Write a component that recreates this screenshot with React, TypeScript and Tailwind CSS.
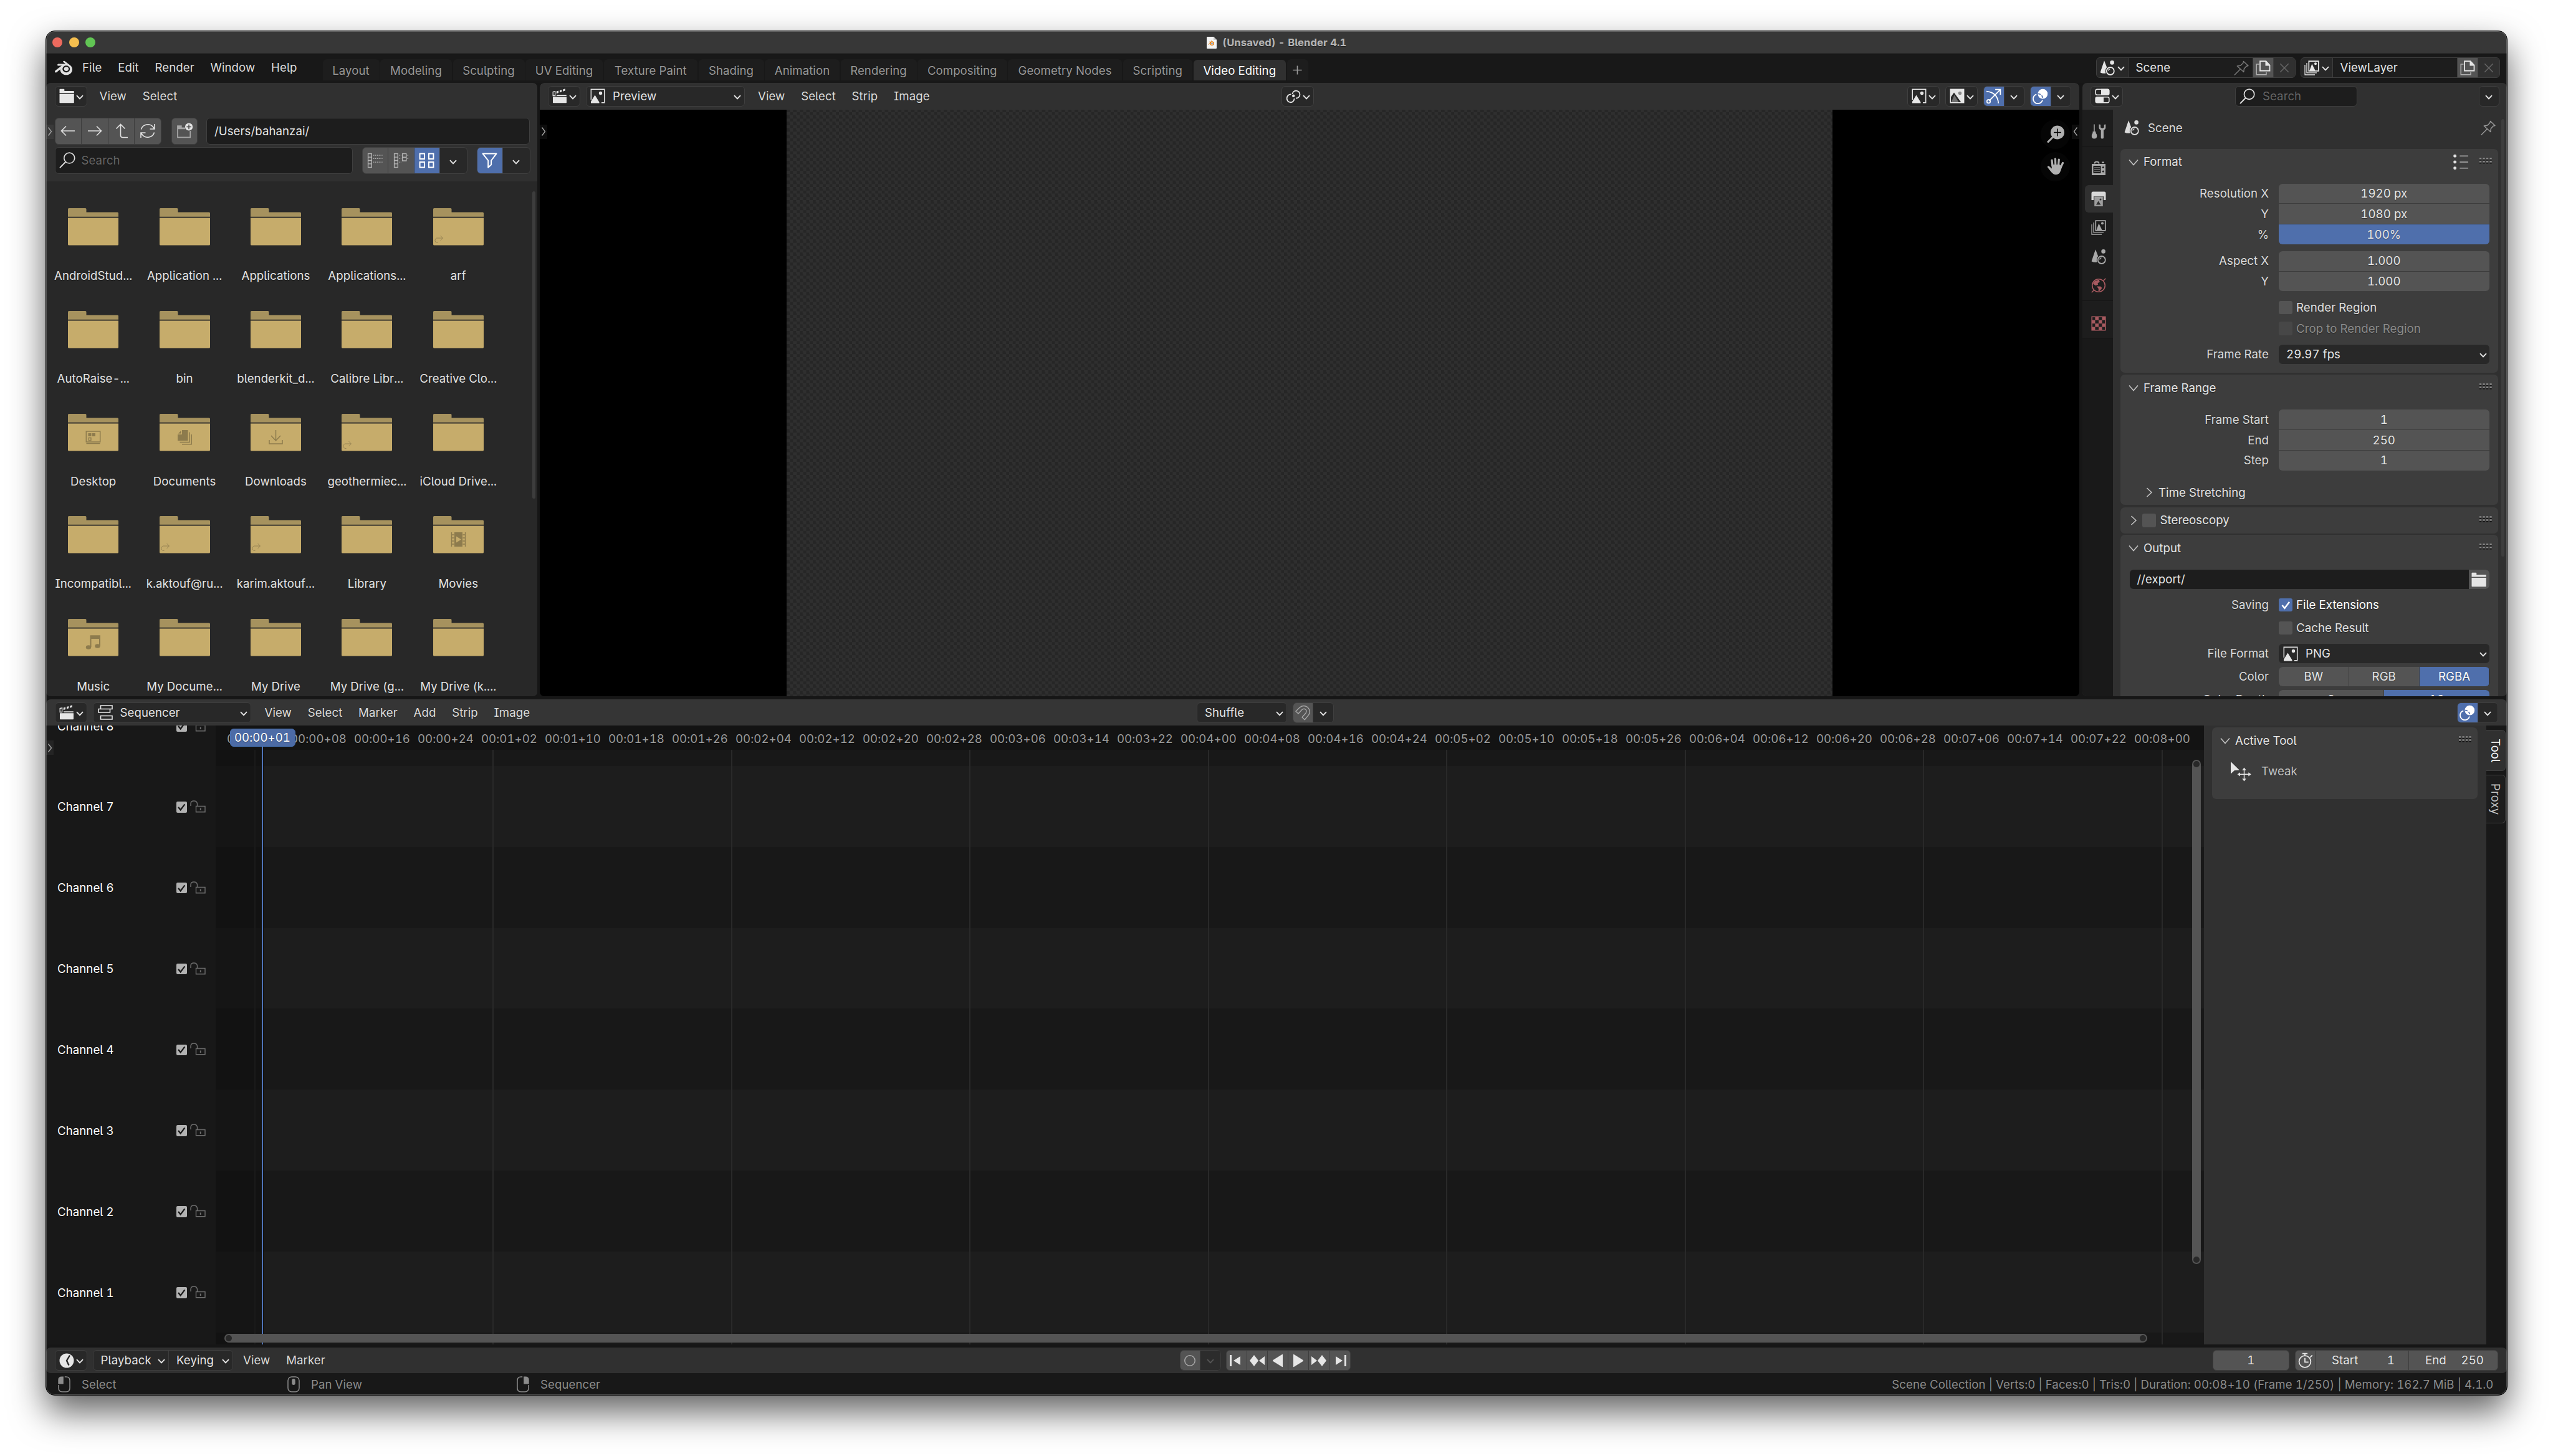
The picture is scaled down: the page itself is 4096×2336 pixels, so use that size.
import type { ReactNode } from "react";
import { twMerge } from "tailwind-merge";
import { SiBlender } from "react-icons/si";

/* ---------- icons ---------- */

type IconProps = { className?: string };

const Svg = ({ className, children, box = "0 0 24 24" }: IconProps & { children: ReactNode; box?: string }) => (
  <svg
    viewBox={box}
    fill="none"
    stroke="currentColor"
    strokeWidth={1.6}
    className={twMerge("shrink-0", className ?? "size-6")}
  >
    {children}
  </svg>
);

const Solid = ({ d }: { d: string }) => <path d={d} fill="currentColor" stroke="none" />;

const Chevron = ({ className }: IconProps) => (
  <Svg box="0 0 12 8" className={twMerge("mt-[3px] h-2 w-3", className)}>
    <path d="M1 1.2 6 6.3 11 1.2" strokeWidth={1.9} />
  </Svg>
);

const PanelArrow = ({ open = false }: { open?: boolean }) => (
  <Svg box="0 0 18 18" className="size-[18px] text-[#c4c4c4]">
    <path d={open ? "M2 5.5 9 13.5 16 5.5" : "M5.5 2 13 9 5.5 16"} strokeWidth={1.5} />
  </Svg>
);

const FolderIcon = ({ className }: IconProps) => (
  <Svg className={className}>
    <Solid d="M.5 1.5Q.5.7 1.3.7H7.5Q8.3.7 8.3 1.5V4H23Q23.8 4 23.8 4.8V7.6H.5Z" />
    <Solid d="M.5 9H23.8V22.4Q23.8 23.2 23 23.2H1.3Q.5 23.2.5 22.4Z" />
  </Svg>
);

const NewFolderIcon = () => (
  <Svg className="size-[26px] text-[#a5a5a5]">
    <Solid d="M1 4H8V7H13V9.5H1Z" />
    <path d="M1.8 9V21.5H20.5V12" />
    <circle cx="18.5" cy="6" r="5.6" fill="#e6e6e6" stroke="none" />
    <path d="M18.5 2.6V9.4M15.1 6H21.9" stroke="#444" strokeWidth={1.4} />
  </Svg>
);

const BackIcon = () => (
  <Svg>
    <path d="M23 12H1.5M9 4.5 1.5 12 9 19.5" />
  </Svg>
);

const ForwardIcon = () => (
  <Svg>
    <path d="M1 12H22.5M15 4.5 22.5 12 15 19.5" />
  </Svg>
);

const ParentIcon = () => (
  <Svg>
    <path d="M10.5 1.5V19Q10.5 22.5 14 22.5H22M3.5 8.5 10.5 1.5 17.5 8.5" />
  </Svg>
);

const RefreshIcon = () => (
  <Svg>
    <path d="M1.5 9.5A11 10.5 0 0 1 20.5 5.5L22.5 8.5M23 1V9H15.5" />
    <path d="M22.5 14.5A11 10.5 0 0 1 3.5 18.5L1.5 15.5M1 23V15H8.5" />
  </Svg>
);

const SearchIcon = ({ className }: IconProps) => (
  <Svg className={className}>
    <circle cx="15" cy="8.8" r="7.8" />
    <path d="M9.6 14.4 1 23.2" strokeWidth={1.9} />
  </Svg>
);

const ListRowsIcon = () => (
  <Svg className="size-[25px] text-[#b5b5b5]">
    <path d="M1.5 1.5H7V22.5H1.5ZM1.5 6.8H7M1.5 12H7M1.5 17.2H7" strokeWidth={1.3} />
    <path d="M9.5 4H24M9.5 9H24M9.5 14.5H24" strokeDasharray="1.4 1.4" strokeWidth={1.3} />
  </Svg>
);

const ListColumnsIcon = () => (
  <Svg className="size-[25px] text-[#b5b5b5]">
    <path d="M1.5 1.5H7V22.5H1.5ZM1.5 6.8H7M1.5 12H7M1.5 17.2H7" strokeWidth={1.3} />
    <path d="M14 1.5H20V12.5H14ZM14 7H20" strokeWidth={1.3} />
    <path d="M9 4H12M9 9H12M9 14.5H12M21.5 4H24M21.5 9H24" strokeDasharray="1.2 1.2" strokeWidth={1.3} />
  </Svg>
);

const GridIcon = () => (
  <Svg className="size-[25px] text-white">
    <path d="M1.5 1.5H8.7V9.5H1.5ZM15.3 1.5H22.5V9.5H15.3ZM1.5 14.5H8.7V22.5H1.5ZM15.3 14.5H22.5V22.5H15.3Z" strokeWidth={1.9} />
  </Svg>
);

const FilterIcon = () => (
  <Svg className="size-[25px] text-white">
    <path d="M1.5 1.5H22.5L14.5 12V18.5L9.8 22.8V12Z" strokeLinejoin="round" strokeWidth={1.9} />
  </Svg>
);

const ClapperIcon = () => (
  <Svg>
    <Solid d="M1 13.3H23V22.5Q23 23.3 22.2 23.3H1.8Q1 23.3 1 22.5Z" />
    <path d="M7 11.2H22.8" strokeWidth={1.7} />
    <path d="M1.2 5.5 4.6 4.8V11.5H1.2Z" strokeWidth={1.3} />
    <Solid d="M6.8 4.6 10 3.5V7L6.8 8.2ZM12 3 15.2 1.9V5.3L12 6.5ZM17.2 1.4 20.8.2V3.6L17.2 4.8Z" />
  </Svg>
);

const ImageIcon = ({ className }: IconProps) => (
  <Svg className={className}>
    <path d="M1.3 18V1.3H22.7V22.7H18" strokeWidth={1.5} />
    <circle cx="16.5" cy="7.5" r="2.7" fill="currentColor" stroke="none" />
    <Solid d="M1 23.5V21L7.5 10.5 14.5 22V23.5Z" />
  </Svg>
);

const ImageAlphaIcon = () => (
  <Svg>
    <Solid d="M1 1H23V23H19L7 6.5 1 15Z" />
    <path d="M1.3 1.3H22.7V22.7H1.3Z" strokeWidth={1.5} />
    <circle cx="16.5" cy="7.5" r="2.7" fill="#8a8a8a" stroke="none" />
    <path d="M2.5 22 7.5 10.5 14.5 22Z" fill="#6e6e6e" stroke="none" />
  </Svg>
);

const PivotIcon = () => (
  <Svg>
    <path d="M10.5 9A6 6 0 1 1 16 15.5" strokeWidth={1.8} />
    <path d="M8.5 9.5A6 6.4 0 1 0 13.6 16" strokeWidth={1.8} />
    <circle cx="12.2" cy="11.8" r="2.2" fill="currentColor" stroke="none" />
  </Svg>
);

const GizmoIcon = () => (
  <Svg className="size-[25px] text-white">
    <path d="M1 4.5Q18 6 19.5 22.8" strokeWidth={1.7} />
    <path d="M5 19 22 2M14.5 1.6H22.4V9.5" strokeWidth={1.7} />
    <circle cx="4.3" cy="19.8" r="2.6" />
  </Svg>
);

const OverlayIcon = () => (
  <Svg className="size-[25px] text-white">
    <circle cx="15.7" cy="8.3" r="7.5" fill="currentColor" stroke="none" />
    <path d="M6 9A7.3 7.3 0 1 0 15.3 17.8" strokeWidth={1.7} />
    <path d="M8.6 8.2A7.3 7.3 0 0 1 15.8 15.4" stroke="#4f6fac" strokeWidth={1.6} strokeDasharray="4 2" />
  </Svg>
);

const PropertiesIcon = () => (
  <Svg>
    <rect x="1.2" y="1.2" width="21.6" height="9" rx="2.5" />
    <Solid d="M10 .8H20.5Q23 .8 23 3.5V8Q23 10.5 20.5 10.5H10Z" />
    <rect x="1.2" y="13.8" width="21.6" height="9" rx="2.5" />
    <Solid d="M14 13.5H3.5Q1 13.5 1 16V20.5Q1 23 3.5 23H14Z" />
  </Svg>
);

const SceneIcon = ({ className }: IconProps) => (
  <Svg className={className}>
    <Solid d="M7 .3 11.2 11Q7.5 15 9.5 20.6 4 21.5.6 19.3Z" />
    <circle cx="19.6" cy="3.4" r="3.3" fill="currentColor" stroke="none" />
    <circle cx="16.8" cy="17" r="6" strokeWidth={1.8} />
    <path d="M13.8 16.5A3.2 3.2 0 0 1 16.5 13.7" strokeWidth={1.3} />
  </Svg>
);

const PinIcon = ({ className }: IconProps) => (
  <Svg className={className}>
    <path d="M15.5 1.5 23 8.5 20 9.3 16.3 13.5 15.8 18.5 5.3 9 10.5 8.2 14.6 4.5ZM10.3 14 .8 23.4" strokeLinejoin="round" strokeWidth={1.4} />
  </Svg>
);

const DuplicateIcon = () => (
  <Svg>
    <path d="M5.5 6H1.2V22.8H17V19" strokeWidth={1.5} className="text-[#b0b0b0]" />
    <path d="M7 1.2H16.5L22.5 7.5V16.5H7Z" strokeWidth={1.8} />
    <Solid d="M15.5.8 23.2 8.6H15.5Z" />
  </Svg>
);

const CloseIcon = () => (
  <Svg className="size-5 text-[#666]">
    <path d="M4 4 20 20M20 4 4 20" strokeWidth={1.8} />
  </Svg>
);

const ViewLayerIcon = ({ className }: IconProps) => (
  <Svg className={className}>
    <path d="M7.3 1.2H22.8V16.8H7.3Z" strokeWidth={1.7} />
    <circle cx="18" cy="5.3" r="2" fill="currentColor" stroke="none" />
    <Solid d="M8.5 16 12.3 5.5 17.5 16Z" />
    <path d="M4 4V19.8H20M1 7V23H17" strokeWidth={1.3} />
  </Svg>
);

const ToolIcon = ({ className }: IconProps) => (
  <Svg className={className}>
    <path d="M5 .5V12" strokeWidth={1.5} />
    <Solid d="M2.5 12H7.5V14.5Q9.3 16 9.3 19 9.3 23.5 5 23.5T.8 19Q.8 16 2.5 14.5Z" />
    <Solid d="M12.5.5V5.5Q12.5 8.5 15.7 9.8V22Q15.7 23.6 17.8 23.6T20 22V9.8Q23.3 8.5 23.3 5.5V.5L20.7 1V5.5L17.9 7 15.1 5.5V1Z" />
  </Svg>
);

const RenderIcon = ({ className }: IconProps) => (
  <Svg className={className}>
    <path d="M5.5 4.5Q5.5 1.5 9 1.5T12.5 4.5" strokeWidth={2} />
    <path fillRule="evenodd" d="M1 5H23V23H1ZM3.5 8H15.5V20H3.5Z" fill="currentColor" stroke="none" />
    <path d="M5 11H14M5 14H14M5 17H14" strokeWidth={1} />
    <circle cx="19.3" cy="10.5" r="1.5" fill="#1d1d1d" stroke="none" />
    <circle cx="19.3" cy="17" r="1.5" fill="#1d1d1d" stroke="none" />
    <Solid d="M17 1.5H21V3.5H17Z" />
  </Svg>
);

const OutputIcon = ({ className }: IconProps) => (
  <Svg className={className}>
    <Solid d="M.5 3Q.5.5 3 .5H21Q23.5.5 23.5 3V14H20V8H4V14H.5Z" />
    <path d="M5.2 8.5H18.8V24H5.2Z" fill="#9d9d9d" stroke="none" />
    <path d="M8 21.5 11.5 15.5 15.5 21.5Z" fill="#303030" stroke="none" />
    <circle cx="15" cy="13" r="1.5" fill="#303030" stroke="none" />
  </Svg>
);

const WorldIcon = ({ className }: IconProps) => (
  <Svg className={className}>
    <circle cx="12" cy="12" r="10.3" strokeWidth={1.6} />
    <path d="M.8 23.3 5 19M19 5 23.3.8" strokeWidth={1.6} />
    <Solid d="M5 5.5 12.5 2.5 13.8 6 10.5 8.5 11 11 7 12 3 9.5Z" />
    <Solid d="M9 13.5H15L17.5 16 14 20.5 11.5 21.5 12 17.5Z" />
  </Svg>
);

const TextureIcon = ({ className }: IconProps) => (
  <Svg className={className}>
    <path d="M1.2 1.2H22.8V22.8H1.2Z" />
    <Solid d="M6.4 1H12V6.5H6.4ZM17.5 1H23V6.5H17.5ZM1 6.5H6.4V12H1ZM12 6.5H17.5V12H12ZM6.4 12H12V17.5H6.4ZM17.5 12H23V17.5H17.5ZM1 17.5H6.4V23H1ZM12 17.5H17.5V23H12Z" />
  </Svg>
);

const PresetIcon = () => (
  <Svg className="size-[26px] text-[#e0e0e0]">
    <path d="M10.5 3H23M10.5 12H23M10.5 21H23" stroke="#b0b0b0" />
    <circle cx="3.4" cy="3" r="2.3" fill="currentColor" stroke="none" />
    <circle cx="3.4" cy="12" r="2.3" fill="currentColor" stroke="none" />
    <circle cx="3.4" cy="21" r="2.3" fill="currentColor" stroke="none" />
  </Svg>
);

const Grip = () => (
  <Svg box="0 0 20 10" className="mb-1 h-2.5 w-5 text-[#8c8c8c]">
    <path d="M0 1.5H20M0 6.5H20" strokeDasharray="3.2 2.3" strokeWidth={2.4} />
    <path d="M0 3.6H20M0 8.6H20" stroke="#111" strokeDasharray="3.2 2.3" strokeWidth={1.8} />
  </Svg>
);

const SequencerIcon = () => (
  <Svg>
    <path d="M4.5 1H23V6.5H4.5ZM1 6.5H19.5V12H1ZM4.5 17.5H23V23H4.5Z" strokeWidth={1.6} />
  </Svg>
);

const MagnetIcon = () => (
  <Svg className="size-[25px] text-[#a8a8a8]">
    <path d="M.9 9.8 7.2 3.7Q13-.5 18.6 3.2 25 9 20.6 15.5L14.6 22.8 10.6 19 16 13Q18.6 9.3 16 7 13.2 4.9 10.3 7.5L4.8 13.5Z" strokeLinejoin="round" strokeWidth={1.3} />
  </Svg>
);

const ClockIcon = () => (
  <Svg>
    <circle cx="12" cy="12" r="11.5" fill="currentColor" stroke="none" />
    <path d="M17 3.5 12 12 15.5 19.5" stroke="#282828" strokeWidth={2.4} />
  </Svg>
);

const StopwatchIcon = () => (
  <Svg className="size-[25px]">
    <circle cx="11.5" cy="14" r="9" strokeWidth={1.7} />
    <path d="M7.5 1.5H15.5M11.5 1.5V5M19.5 7.5 22.8 4.3M11.5 8.5V14.7H17" strokeWidth={1.7} />
  </Svg>
);

const MouseIcon = ({ button }: { button: "left" | "middle" | "right" }) => (
  <Svg box="0 0 20 26" className="h-[26px] w-5 text-[#8c8c8c]">
    {button === "middle" && (
      <>
        <rect x="1" y="1" width="18" height="24" rx="6" strokeWidth={1.5} />
        <rect x="7.3" y="4" width="5.4" height="10" rx="2.7" fill="currentColor" stroke="none" />
      </>
    )}
    {button !== "middle" && (
      <g transform={button === "right" ? "matrix(-1 0 0 1 20 0)" : undefined}>
        <Solid d="M8.8.5V12.5H.3V6Q.3.5 6 .5Z" />
        <path d="M10.8 1H13Q19 1 19 7V19Q19 25 13 25H7Q1 25 1 19V14" strokeWidth={1.5} />
      </g>
    )}
  </Svg>
);

const TweakIcon = () => (
  <Svg box="0 0 33 32" className="h-8 w-[33px] text-[#e6e6e6]">
    <Solid d="M0 0 13.8 13.5 6 14 0 19.5Z" />
    <path d="M21.5 13V27.5M14 20.3H29" strokeWidth={1.4} />
    <Solid d="M21.5 9.5 24.7 13.8H18.3ZM21.5 31.5 18.3 27.2H24.7ZM10.5 20.3 15 17.2V23.4ZM32.8 20.3 28.3 17.2V23.4Z" />
  </Svg>
);

const ZoomIcon = () => (
  <Svg box="0 0 28 28" className="size-7 text-[#b0b0b0]">
    <circle cx="17" cy="11.5" r="11" fill="currentColor" stroke="none" />
    <path d="M9.5 19 1 27.5" strokeWidth={3} />
    <path d="M17 5.5V17.5M11 11.5H23" stroke="#050505" strokeWidth={1.5} />
  </Svg>
);

const HandIcon = () => (
  <Svg box="0 0 28 28" className="size-7 text-[#b0b0b0]">
    <path d="M9 13 8 4M13.8 12 13.5 1.8M18.5 12 19.3 3M22 16 25.5 8.5" strokeWidth={3.2} strokeLinecap="round" />
    <Solid d="M7.2 11H20.5L24 14.5Q22.5 22 19.5 25.5 15.5 28.5 11 26.5 7.5 24.5.8 15 .8 13 3 13.2L8 17.5Z" />
  </Svg>
);

const CheckMark = ({ className }: IconProps) => (
  <Svg box="0 0 20 20" className={className}>
    <path d="M4.5 10 8.5 14.8 16 4.8" strokeWidth={2.5} />
  </Svg>
);

const UnlockIcon = () => (
  <Svg box="0 0 25 20" className="mb-0.5 h-5 w-[25px] text-[#6e6e6e]">
    <path d="M1 9V5.5Q1 1 6 1T11.5 5.5V9M9.5 9.5H24V18.8H9.5Z" strokeWidth={1.4} />
    <path d="M16.7 12.5V16" strokeWidth={1.8} />
  </Svg>
);

/* ---------- shared widgets ---------- */

const Box = ({ className, children }: { className?: string; children?: ReactNode }) => (
  <div
    className={twMerge(
      "flex h-[33px] shrink-0 items-center overflow-hidden rounded-[6px] border border-[#3f3f3f] bg-[#282828]",
      className
    )}
  >
    {children}
  </div>
);

const Cell = ({ className, children }: { className?: string; children?: ReactNode }) => (
  <div
    className={twMerge(
      "flex h-full shrink-0 items-center justify-center border-r border-[#3d3d3d] last:border-r-0",
      className
    )}
  >
    {children}
  </div>
);

const EditorButton = ({ children, className }: { children: ReactNode; className?: string }) => (
  <Box className={twMerge("w-[52px] justify-between pr-[5px] pl-[6px]", className)}>
    {children}
    <Chevron />
  </Box>
);

const SideArrow = ({ flip, className }: { flip?: boolean; className?: string }) => (
  <div className={twMerge("absolute flex h-[23px] w-3 items-center justify-center bg-white/5", className)}>
    <Svg box="0 0 8 16" className={twMerge("h-4 w-2 text-[#a0a0a0]", flip && "rotate-180")}>
      <path d="M1.5 1.5 6.5 8 1.5 14.5" strokeWidth={1.4} />
    </Svg>
  </div>
);

const Menus = ({ items, className }: { items: string[]; className?: string }) => (
  <div className={twMerge("flex shrink-0 gap-[25.8px] text-[#dcdcdc]", className)}>
    {items.map((item) => (
      <span key={item}>{item}</span>
    ))}
  </div>
);

/* ---------- title and top bar ---------- */

const TitleBar = () => (
  <div className="relative flex h-[37px] shrink-0 items-center justify-center border-b border-black bg-[#373737]">
    <div className="absolute left-2.5 flex gap-[10.5px]">
      <span className="size-4 rounded-full bg-[#ed6a5e]" />
      <span className="size-4 rounded-full bg-[#f5bf4f]" />
      <span className="size-4 rounded-full bg-[#61c554]" />
    </div>
    <Svg box="0 0 16 19" className="mr-2.5 h-[19px] w-4">
      <path d="M0 1Q0 0 1 0H11L16 5V18Q16 19 15 19H1Q0 19 0 18Z" fill="#f4f4f4" stroke="none" />
      <path d="M11 0V5H16Z" fill="#c9c9c9" stroke="none" />
      <circle cx="8.5" cy="10.8" r="2.6" stroke="#e87d0d" strokeWidth={1.4} />
      <circle cx="8.5" cy="10.8" r="1" fill="#265787" stroke="none" />
      <path d="M2.5 12.5 7.5 8.5M4 8.3H8M7 6.5 10 8.5" stroke="#e87d0d" strokeWidth={1} />
    </Svg>
    <span className="text-[16.6px] font-bold text-[#b6b6b6]">(Unsaved) - Blender 4.1</span>
  </div>
);

const tabs = [
  { name: "Layout", width: "w-[91px]" },
  { name: "Modeling", width: "w-[115px]" },
  { name: "Sculpting", width: "w-[115px]" },
  { name: "UV Editing", width: "w-[124px]" },
  { name: "Texture Paint", width: "w-[150.5px]" },
  { name: "Shading", width: "w-[105px]" },
  { name: "Animation", width: "w-[120px]" },
  { name: "Rendering", width: "w-[122px]" },
  { name: "Compositing", width: "w-[143.5px]" },
  { name: "Geometry Nodes", width: "w-[183px]" },
  { name: "Scripting", width: "w-[111.5px]" },
];

const DataBlock = ({ icon, name, pin, className }: { icon: ReactNode; name: string; pin?: boolean; className?: string }) => (
  <Box className={twMerge("w-[320px]", className)}>
    <Cell className="w-[51px] gap-1">
      {icon}
      <Chevron />
    </Cell>
    <Cell className="w-[200.5px] justify-between bg-[#1d1d1d] pr-1.5 pl-3">
      <span className="text-[#e6e6e6]">{name}</span>
      {pin && <PinIcon className="size-6 text-[#7c7c7c]" />}
    </Cell>
    <Cell className="w-[33px] bg-[#545454]">
      <DuplicateIcon />
    </Cell>
    <Cell className="flex-1 bg-[#303030]">
      <CloseIcon />
    </Cell>
  </Box>
);

const TopBar = () => (
  <div className="flex h-[46px] shrink-0 items-start bg-[#181818]">
    <div className="ml-[14px] flex h-[43.5px] w-[429.5px] items-center text-[#e0e0e0]">
      <SiBlender className="size-[28px]" />
      <Menus items={["File", "Edit", "Render", "Window", "Help"]} className="ml-[16px]" />
    </div>
    <div className="mt-[7.5px] flex h-[34px] items-end gap-[1.5px] text-[#989898]">
      {tabs.map((tab) => (
        <div
          key={tab.name}
          className={twMerge("flex h-full items-center justify-center rounded-t-[6px] bg-[#1d1d1d] pt-1", tab.width)}
        >
          {tab.name}
        </div>
      ))}
      <div className="flex h-[33px] w-[148.5px] items-center justify-center rounded-t-[6px] bg-[#303030] pt-[3px] text-white">
        Video Editing
      </div>
      <div className="flex h-full w-[34px] items-center justify-center rounded-t-[6px] bg-[#1d1d1d] pt-0.5">
        <Svg className="size-[17px]">
          <path d="M12 2V22M2 12H22" strokeWidth={2.4} />
        </Svg>
      </div>
    </div>
    <div className="mt-[5px] mr-[11.5px] ml-auto flex gap-2">
      <DataBlock icon={<SceneIcon />} name="Scene" pin />
      <DataBlock icon={<ViewLayerIcon />} name="ViewLayer" />
    </div>
  </div>
);

/* ---------- file browser ---------- */

const emblems: Record<string, ReactNode> = {
  Desktop: (
    <>
      <path d="M.8 2.5H23.2V19.5H.8ZM1 22H23" strokeWidth={1.5} />
      <Solid d="M4 5.5H9V10.5H4Z" />
      <Solid d="M10.5 5.5H15.5V10.5H10.5Z" />
      <path d="M4.7 13H8.5V16.8H4.7Z" strokeWidth={1.3} />
    </>
  ),
  Documents: (
    <>
      <Solid d="M7.5.5H17V17.5H.5V7.5H7.5ZM6 1.5V6H1.5Z" />
      <path d="M19.5 4V20H4M22.8 7.5V23.3H7.5" strokeWidth={1.5} />
    </>
  ),
  Downloads: <path d="M12 .5V17.5M4.5 9.5 12 17.5 19.5 9.5M1.5 16.5V22.5H22.5V16.5" strokeWidth={1.5} />,
  Movies: (
    <>
      <path fillRule="evenodd" d="M5.5.5H18.5V23.5H5.5ZM8.5 7V17L16.5 12Z" fill="currentColor" stroke="none" />
      <path d="M1 .5V23.5M23 .5V23.5M1 4.5H5M1 9.5H5M1 14.5H5M1 19.5H5M19 4.5H23M19 9.5H23M19 14.5H23M19 19.5H23" strokeWidth={1.4} />
    </>
  ),
  Music: (
    <>
      <path d="M8 19.5V2H22.5V17.5" strokeWidth={2} />
      <Solid d="M7.5 1H23.5V6.5H7.5Z" />
      <ellipse cx="4.5" cy="20" rx="4.2" ry="3.2" fill="currentColor" stroke="none" />
      <ellipse cx="19" cy="18" rx="4.2" ry="3.2" fill="currentColor" stroke="none" />
    </>
  ),
};

const links = ["arf", "geothermiec...", "k.aktouf@ru...", "karim.aktouf..."];

const files = [
  "AndroidStud...", "Application ...", "Applications", "Applications...", "arf",
  "AutoRaise-...", "bin", "blenderkit_d...", "Calibre Libr...", "Creative Clo...",
  "Desktop", "Documents", "Downloads", "geothermiec...", "iCloud Drive...",
  "Incompatibl...", "k.aktouf@ru...", "karim.aktouf...", "Library", "Movies",
  "Music", "My Docume...", "My Drive", "My Drive (g...", "My Drive (k....",
];

const FileTile = ({ name }: { name: string }) => (
  <div className="flex h-[164.75px] w-[146.4px] flex-col items-center">
    <svg viewBox="0 0 81 60" className="h-[60px] w-[81px] shrink-0 text-[#8d7b4d]" fill="none" stroke="currentColor">
      <path d="M0 1.5Q0 0 1.5 0H28Q29.5 0 29.5 1.5V6.5H79.5Q81 6.5 81 8V13.8H0Z" fill="#a6925e" stroke="none" />
      <path d="M0 15.5H81V58Q81 59.5 79.5 59.5H1.5Q0 59.5 0 58Z" fill="#c6ac6b" stroke="none" />
      {emblems[name] && <g transform="translate(28.5 25.5)">{emblems[name]}</g>}
      {links.includes(name) && <path d="M7.5 55.5H5.5A4 4 0 0 1 5.5 48H15M11.5 44 15.5 48 11.5 52" strokeWidth={1} opacity={0.8} />}
    </svg>
    <span className="mt-[39px] text-[#e4e4e4]">{name}</span>
  </div>
);

const FileBrowser = () => (
  <section className="relative flex w-[788px] shrink-0 flex-col overflow-hidden rounded-[7px] bg-[#303030]">
    <SideArrow className="top-[66.5px] left-0" />
    <div className="flex h-[42.5px] shrink-0 items-center pl-[13.5px]">
      <EditorButton>
        <FolderIcon />
      </EditorButton>
      <Menus items={["View", "Select"]} className="ml-5" />
    </div>
    <div className="mt-[13px] flex pl-[13.5px]">
      <Box className="h-[43px] w-[171.5px] bg-[#545454] text-[#e0e0e0]">
        <Cell className="flex-1"><BackIcon /></Cell>
        <Cell className="flex-1"><ForwardIcon /></Cell>
        <Cell className="flex-1"><ParentIcon /></Cell>
        <Cell className="flex-1"><RefreshIcon /></Cell>
      </Box>
      <Box className="ml-[15.5px] h-[43px] w-[42px] justify-center bg-[#545454]">
        <NewFolderIcon />
      </Box>
      <Box className="ml-[14.5px] h-[43px] w-[519px] bg-[#1d1d1d] pl-3 text-[#e6e6e6]">/Users/bahanzai/</Box>
    </div>
    <div className="mt-1 flex pl-[13.5px]">
      <Box className="h-[43px] w-[478px] gap-2.5 bg-[#1d1d1d] pl-1.5 text-[#666]">
        <SearchIcon className="size-[26px] text-[#dcdcdc]" />
        Search
      </Box>
      <Box className="ml-[15px] h-[43px] w-[169px]">
        <Cell className="w-[41.5px] bg-[#545454]"><ListRowsIcon /></Cell>
        <Cell className="w-[41.5px] bg-[#545454]"><ListColumnsIcon /></Cell>
        <Cell className="w-[41.5px] bg-[#4f6fac]"><GridIcon /></Cell>
        <Cell className="flex-1"><Chevron className="mt-[5px]" /></Cell>
      </Box>
      <Box className="ml-[15px] h-[43px] w-[86px]">
        <Cell className="w-[41.5px] bg-[#4f6fac]"><FilterIcon /></Cell>
        <Cell className="flex-1"><Chevron className="mt-[5px]" /></Cell>
      </Box>
    </div>
    <div className="mt-[12.5px] flex flex-1 justify-between overflow-hidden bg-[#282828] pr-[3.5px] pl-[2.5px]">
      <div className="flex w-[740px] flex-wrap content-start pt-[43px]">
        {files.map((name) => (
          <FileTile key={name} name={name} />
        ))}
      </div>
      <div className="mt-[15.5px] h-[493px] w-[5px] rounded-full bg-[#3d3d3d]" />
    </div>
  </section>
);

/* ---------- preview ---------- */

const IconPair = ({ icon, className }: { icon: ReactNode; className?: string }) => (
  <Box className={twMerge("w-[66px]", className)}>
    <Cell className="w-[32.5px] bg-[#4f6fac]">{icon}</Cell>
    <Cell className="flex-1"><Chevron /></Cell>
  </Box>
);

const Preview = () => (
  <section className="flex w-[2470px] shrink-0 flex-col overflow-hidden rounded-[7px] bg-black">
    <div className="relative flex h-[42.5px] shrink-0 items-center bg-[#303030] pl-[13px]">
      <EditorButton>
        <ClapperIcon />
      </EditorButton>
      <Box className="ml-[9px] w-[254.5px] gap-3 pr-[5px] pl-[6px] text-[#e6e6e6]">
        <ImageIcon />
        <span className="flex-1">Preview</span>
        <Chevron />
      </Box>
      <Menus items={["View", "Select", "Strip", "Image"]} className="ml-[21.5px] w-[840px]" />
      <EditorButton>
        <PivotIcon />
      </EditorButton>
      <div className="mr-[13px] ml-auto flex gap-[9px]">
        <EditorButton>
          <ImageIcon />
        </EditorButton>
        <EditorButton>
          <ImageAlphaIcon />
        </EditorButton>
        <IconPair icon={<GizmoIcon />} />
        <IconPair icon={<OverlayIcon />} />
      </div>
    </div>
    <div className="relative flex flex-1 justify-center">
      <div className="h-full w-[1678px] bg-[repeating-conic-gradient(#2f2f2f_0_25%,#262626_0_50%)] bg-[length:10.5px_10.5px] bg-[position:0_-2px]" />
      <SideArrow className="top-6 left-0" />
      <SideArrow flip className="top-6 right-0" />
      <div className="absolute top-[16px] right-[15px] flex flex-col gap-[5px]">
        <div className="flex size-[47px] items-center justify-center rounded-full bg-[#050505]">
          <ZoomIcon />
        </div>
        <div className="flex size-[47px] items-center justify-center rounded-full bg-[#050505]">
          <HandIcon />
        </div>
      </div>
    </div>
  </section>
);

/* ---------- properties ---------- */

const Panel = ({
  title,
  open = true,
  preset,
  checkbox,
  className,
  children,
}: {
  title: string;
  open?: boolean;
  preset?: boolean;
  checkbox?: boolean;
  className?: string;
  children?: ReactNode;
}) => (
  <div className={twMerge("w-[606px] shrink-0 rounded-[7px] bg-[#3d3d3d]", className)}>
    <div className="flex h-[42.5px] items-center pr-[10px] pl-3 text-[#e6e6e6]">
      <PanelArrow open={open} />
      {checkbox && <span className="ml-[5px] size-[21.5px] rounded-[3px] bg-[#545454]" />}
      <span className="ml-[7px] flex-1">{title}</span>
      {preset && <PresetIcon />}
      <span className="ml-[17px]">
        <Grip />
      </span>
    </div>
    {children}
  </div>
);

type FieldData = { label: string; value: string; active?: boolean };

const FieldGroup = ({ fields, className }: { fields: FieldData[]; className?: string }) => (
  <div className={twMerge("flex gap-4", className)}>
    <div className="flex w-[238px] flex-col items-end gap-px text-[#dcdcdc]">
      {fields.map((field) => (
        <span key={field.label} className="flex h-[31.9px] items-center">{field.label}</span>
      ))}
    </div>
    <div className="flex w-[337.5px] flex-col gap-px overflow-hidden rounded-[6px] text-[#e6e6e6]">
      {fields.map((field) => (
        <div
          key={field.label}
          className={twMerge("flex h-[31.9px] items-center justify-center", field.active ? "bg-[#4f6fac]" : "bg-[#545454]")}
        >
          {field.value}
        </div>
      ))}
    </div>
  </div>
);

const CheckRow = ({ label, text, checked, disabled }: { label?: string; text: string; checked?: boolean; disabled?: boolean }) => (
  <div className={twMerge("flex h-[33.3px] items-center", checked ? "text-white" : "text-[#e0e0e0]")}>
    <span className="w-[238px] text-right text-[#dcdcdc]">{label}</span>
    <span
      className={twMerge(
        "ml-4 flex size-[21.5px] items-center justify-center rounded-[3px]",
        checked ? "bg-[#4f6fac]" : disabled ? "bg-[#474747]" : "bg-[#545454]"
      )}
    >
      {checked && <CheckMark className="size-5" />}
    </span>
    <span className={twMerge("ml-[6.5px]", disabled && "text-[#8b8b8b]")}>{text}</span>
  </div>
);

const Labeled = ({ label, className, children }: { label: string; className?: string; children: ReactNode }) => (
  <div className={twMerge("flex h-[31px] items-center gap-4", className)}>
    <span className="w-[238px] text-right text-[#dcdcdc]">{label}</span>
    <div className="flex h-full w-[337.5px] items-center overflow-hidden rounded-[6px] bg-[#282828] text-[#e6e6e6]">
      {children}
    </div>
  </div>
);

const PropertyTabs = () => (
  <div className="flex w-[48.5px] shrink-0 flex-col items-end bg-[#191919] text-[#a8a8a8]">
    <div className="flex h-[60px] w-full items-center justify-center border-b border-[#151515] bg-[#1d1d1d] pt-3 pl-1">
      <ToolIcon />
    </div>
    <div className="flex h-[61.5px] w-full items-center justify-center bg-[#1d1d1d] pt-[8px] pl-1">
      <RenderIcon />
    </div>
    <div className="flex w-full justify-end bg-[#1d1d1d]">
      <div className="flex h-[44px] w-[44.5px] items-center justify-center rounded-l-[6px] bg-[#303030] text-[#d8d8d8]">
        <OutputIcon />
      </div>
    </div>
    <div className="flex h-[141.5px] w-full flex-col items-center gap-[22.5px] border-b border-[#151515] bg-[#1d1d1d] pt-3 pl-1">
      <ViewLayerIcon />
      <SceneIcon />
      <WorldIcon className="size-6 text-[#a85a60]" />
    </div>
    <div className="flex h-[60px] w-full items-center justify-center border-b border-[#151515] bg-[#1d1d1d] pt-3.5 pl-1">
      <TextureIcon className="size-6 text-[#a85a60]" />
    </div>
  </div>
);

const Properties = () => (
  <section className="flex w-[681px] shrink-0 flex-col overflow-hidden rounded-[7px] bg-[#303030]">
    <div className="flex h-[42.5px] shrink-0 items-center pr-[12px] pl-[13px]">
      <EditorButton>
        <PropertiesIcon />
      </EditorButton>
      <Box className="ml-[180px] w-[196px] gap-[12px] bg-[#1d1d1d] pl-1.5 text-[#666]">
        <SearchIcon className="size-[25px] text-[#dcdcdc]" />
        Search
      </Box>
      <Box className="ml-auto w-[33.5px] justify-center">
        <Chevron />
      </Box>
    </div>
    <div className="flex min-h-0 flex-1">
      <PropertyTabs />
      <div className="ml-[12.5px] flex w-[606px] shrink-0 flex-col">
        <div className="flex h-[63px] shrink-0 items-center pr-1 pl-[6px] text-[#dcdcdc]">
          <SceneIcon className="mt-[-4px] size-6" />
          <span className="mt-[-3px] ml-[14px] flex-1">Scene</span>
          <PinIcon className="mt-[-4px] size-6 text-[#9a9a9a]" />
        </div>
        <Panel title="Format" preset className="h-[359px]">
          <FieldGroup
            className="mt-[13.5px]"
            fields={[
              { label: "Resolution X", value: "1920 px" },
              { label: "Y", value: "1080 px" },
              { label: "%", value: "100%", active: true },
            ]}
          />
          <FieldGroup
            className="mt-[10.5px]"
            fields={[
              { label: "Aspect X", value: "1.000" },
              { label: "Y", value: "1.000" },
            ]}
          />
          <div className="mt-[9.5px] mb-[9px]">
            <CheckRow text="Render Region" />
            <CheckRow text="Crop to Render Region" disabled />
          </div>
          <Labeled label="Frame Rate">
            <span className="ml-3 flex-1">29.97 fps</span>
            <Chevron className="mr-1" />
          </Labeled>
        </Panel>
        <Panel title="Frame Range" className="mt-[3.5px] h-[209px]">
          <FieldGroup
            className="mt-[13.5px]"
            fields={[
              { label: "Frame Start", value: "1" },
              { label: "End", value: "250" },
              { label: "Step", value: "1" },
            ]}
          />
          <div className="mt-[19.5px] ml-[37px] flex h-8 items-center gap-[6px] text-[#e6e6e6]">
            <PanelArrow />
            Time Stretching
          </div>
        </Panel>
        <Panel title="Stereoscopy" open={false} checkbox className="mt-[3.5px]" />
        <Panel title="Output" className="mt-[2px]">
          <div className="mt-[13.5px] ml-[14.5px] flex h-[31px] w-[577px] items-center overflow-hidden rounded-[6px] bg-[#1d1d1d] pl-3 text-[#e6e6e6]">
            <span className="flex-1">//export/</span>
            <div className="flex h-full w-[33px] items-center justify-center bg-[#545454]">
              <FolderIcon />
            </div>
          </div>
          <div className="mt-[9px] mb-[9px] flex flex-col gap-[3.5px]">
            <CheckRow label="Saving" text="File Extensions" checked />
            <CheckRow text="Cache Result" />
          </div>
          <Labeled label="File Format">
            <ImageIcon className="ml-[7px] size-6" />
            <span className="ml-3 flex-1">PNG</span>
            <Chevron className="mr-1" />
          </Labeled>
          <Labeled label="Color" className="mt-[5.5px]">
            <Cell className="flex-1 bg-[#545454]">BW</Cell>
            <Cell className="flex-1 bg-[#545454]">RGB</Cell>
            <Cell className="flex-1 bg-[#4f6fac] text-white">RGBA</Cell>
          </Labeled>
          <Labeled label="Color Depth" className="mt-[6px]">
            <Cell className="flex-1 bg-[#545454]">8</Cell>
            <Cell className="flex-1 bg-[#4f6fac] text-white">16</Cell>
          </Labeled>
        </Panel>
      </div>
      <div className="mt-[15.5px] ml-[5px] h-[702px] w-[5px] rounded-full bg-[#3d3d3d]" />
    </div>
  </section>
);

/* ---------- sequencer ---------- */

const channels = [8, 7, 6, 5, 4, 3, 2, 1];

const FPS = 30;
const LABEL_STEP = 8;
const pad = (n: number) => String(n).padStart(2, "0");
const timecodes = Array.from({ length: 31 }, (_, i) => {
  const frame = i * LABEL_STEP;
  return `00:${pad(Math.floor(frame / FPS))}+${pad(frame % FPS)}`;
});

const ChannelList = () => (
  <div className="relative w-[271.5px] shrink-0 overflow-hidden bg-[#181818]">
    <SideArrow className="top-6 left-0" />
    <div className="mt-[-64px]">
      {channels.map((n) => (
        <div key={n} className="flex h-[129.86px] items-center pl-[18px] text-white">
          <span className="w-[190.5px]">Channel {n}</span>
          <span className="flex size-[17.5px] items-center justify-center rounded-[2px] bg-[#b2b2b2] text-[#181818]">
            <CheckMark className="size-[18px]" />
          </span>
          <span className="ml-[5px]">
            <UnlockIcon />
          </span>
        </div>
      ))}
    </div>
  </div>
);

const Tracks = () => (
  <div className="relative w-[3190.5px] shrink-0 overflow-hidden bg-[#181818]">
    <div className="mt-[-65px]">
      {channels.map((n) => (
        <div key={n} className={twMerge("h-[129.86px]", n % 2 ? "bg-[#1d1d1d]" : "bg-[#181818]")} />
      ))}
    </div>
    <div className="absolute inset-y-0 left-0 w-[75px] bg-black/25" />
    <div className="absolute inset-y-0 left-[62px] flex">
      {Array.from({ length: 9 }, (_, i) => (
        <div key={i} className="w-[382.5px] shrink-0 border-l-2 border-[#292929] first:border-[#1a1a1a]" />
      ))}
    </div>
    <div className="absolute top-0 left-0 flex h-[39px] w-full items-center bg-[#131313] pt-[3px] pl-[12.5px] text-[#9b9b9b]">
      {timecodes.map((code) => (
        <span key={code} className="w-[102px] shrink-0 text-center">{code}</span>
      ))}
    </div>
    <div className="absolute top-8 bottom-0 left-[73.5px] w-[4px] border-x border-[#111] bg-[#4f74b8]" />
    <div className="absolute top-[5px] left-[23px] flex h-[28.5px] w-[105px] items-center justify-center rounded-[6px] border border-[#4772b3] bg-[#4c6ba6] text-white">
      00:00+01
    </div>
    <div className="absolute top-[55px] right-[5px] flex h-[809px] w-3.5 flex-col justify-between rounded-full bg-[#545454] p-0.5">
      <span className="size-2.5 rounded-full bg-[#282828]" />
      <span className="size-2.5 rounded-full bg-[#282828]" />
    </div>
    <div className="absolute bottom-[3px] left-[14px] flex h-3.5 w-[3085px] justify-between rounded-full bg-[#545454] p-0.5">
      <span className="size-2.5 rounded-full bg-[#282828]" />
      <span className="size-2.5 rounded-full bg-[#282828]" />
    </div>
  </div>
);

const Sequencer = () => (
  <section className="mt-[5px] flex h-[1035px] shrink-0 flex-col overflow-hidden rounded-t-[7px] bg-[#353535]">
    <div className="flex h-[42px] shrink-0 items-center pl-[13.5px]">
      <EditorButton>
        <ClapperIcon />
      </EditorButton>
      <Box className="ml-[9px] w-[254.5px] gap-3 pr-[5px] pl-[7px] text-[#e6e6e6]">
        <SequencerIcon />
        <span className="flex-1">Sequencer</span>
        <Chevron />
      </Box>
      <Menus items={["View", "Select", "Marker", "Add", "Strip", "Image"]} className="ml-[21.5px] w-[1495px]" />
      <Box className="w-[145.5px] justify-between pr-[5px] pl-[12.5px] text-[#e6e6e6]">
        Shuffle
        <Chevron />
      </Box>
      <Box className="ml-[8.5px] w-[66px]">
        <Cell className="w-[32.5px] bg-[#545454]"><MagnetIcon /></Cell>
        <Cell className="flex-1"><Chevron /></Cell>
      </Box>
      <IconPair icon={<OverlayIcon />} className="mr-[14px] ml-auto" />
    </div>
    <div className="flex min-h-0 flex-1">
      <ChannelList />
      <Tracks />
      <div className="w-[452.5px] shrink-0 bg-[#303030] pt-[3px] pl-[13px]">
        <Panel title="Active Tool" className="h-[114.5px] w-[426px]">
          <div className="mt-3 ml-[30px] flex items-center gap-4 text-[#c4c4c4]">
            <TweakIcon />
            <span>Tweak</span>
          </div>
        </Panel>
      </div>
      <div className="flex-1 bg-[#181818] pt-[7px]">
        <div className="flex h-[65.5px] w-[31px] items-center justify-center rounded-r-[6px] border border-l-0 border-[#3f3f3f] bg-[#303030] text-white [writing-mode:vertical-rl]">
          Tool
        </div>
        <div className="mt-[6.5px] flex h-[77.5px] w-[31px] items-center justify-center rounded-r-[6px] border border-l-0 border-[#3f3f3f] bg-[#1d1d1d] text-[#c0c0c0] [writing-mode:vertical-rl]">
          Proxy
        </div>
      </div>
    </div>
  </section>
);

/* ---------- timeline and status bar ---------- */

const transport = [
  "M1 3H4V21H1ZM18 5V19L7 12Z",
  "M0 12 7 3 14 12 7 21ZM24 5V19L15 12Z",
  "M20 2.5V21.5Q20 22.5 19 22L4.5 13Q3.5 12 4.5 11L19 2Q20 1.5 20 2.5Z",
  "M4 2.5V21.5Q4 22.5 5 22L19.5 13Q20.5 12 19.5 11L5 2Q4 1.5 4 2.5Z",
  "M24 12 17 3 10 12 17 21ZM0 5V19L9 12Z",
  "M23 3H20V21H23ZM6 5V19L17 12Z",
];

const Timeline = () => (
  <section className="mt-[5px] flex h-[41px] shrink-0 items-center rounded-[7px] bg-[#303030] pr-[14px] pl-[13.5px]">
    <EditorButton>
      <ClockIcon />
    </EditorButton>
    <Box className="ml-[9px] w-[225px] text-[#e6e6e6]">
      <Cell className="w-[121.5px] justify-between pr-[5px] pl-3">
        Playback
        <Chevron />
      </Cell>
      <Cell className="flex-1 justify-between pr-[5px] pl-3">
        Keying
        <Chevron />
      </Cell>
    </Box>
    <Menus items={["View", "Marker"]} className="ml-[16.5px] w-[1502.5px]" />
    <Box className="w-[66px]">
      <Cell className="w-[32.5px] bg-[#545454] text-[#a8a8a8]">
        <Svg className="size-[18px]">
          <circle cx="12" cy="12" r="11" strokeWidth={2} />
        </Svg>
      </Cell>
      <Cell className="flex-1 bg-[#2c2c2c] text-[#555]"><Chevron /></Cell>
    </Box>
    <Box className="ml-[8px] w-[200px] bg-[#545454] text-[#e6e6e6]">
      {transport.map((d) => (
        <Cell key={d} className="flex-1">
          <Svg className="size-[26px]" box="-1 -1 26 26">
            <Solid d={d} />
          </Svg>
        </Cell>
      ))}
    </Box>
    <Box className="ml-auto w-[123.5px] justify-center bg-[#545454] text-[#e6e6e6]">1</Box>
    <Box className="ml-[9px] w-[326px] bg-[#545454] text-[#e6e6e6]">
      <Cell className="w-[32px]"><StopwatchIcon /></Cell>
      <Cell className="w-[150px] justify-between pr-[22px] pl-[26px]">
        <span>Start</span>
        <span>1</span>
      </Cell>
      <Cell className="flex-1 justify-between pr-[22px] pl-[26px]">
        <span>End</span>
        <span>250</span>
      </Cell>
    </Box>
  </section>
);

const StatusBar = () => (
  <div className="flex flex-1 items-center bg-[#181818] pt-1 pr-[21.5px] pb-[3px] pl-[19px] text-[#8c8c8c]">
    <div className="flex w-[368px] items-center gap-[18px]">
      <MouseIcon button="left" />
      Select
    </div>
    <div className="flex w-[368px] items-center gap-[18px]">
      <MouseIcon button="middle" />
      Pan View
    </div>
    <div className="flex items-center gap-[18px]">
      <MouseIcon button="right" />
      Sequencer
    </div>
    <span className="ml-auto">
      Scene Collection | Verts:0 | Faces:0 | Tris:0 | Duration: 00:08+10 (Frame 1/250) | Memory: 162.7 MiB | 4.1.0
    </span>
  </div>
);

const App = () => (
  <div className="h-[2336px] w-[4096px] overflow-hidden bg-white pt-[49px] pl-[73px] font-['Inter',sans-serif] text-[18.63px] leading-none tracking-[0.07px] whitespace-nowrap text-[#e6e6e6] [font-feature-settings:'tnum','cv05','cv08'] [text-shadow:0_1px_1px_rgba(0,0,0,0.45)]">
    <div className="relative flex h-[2190px] w-[3950px] flex-col overflow-hidden rounded-[15px] border border-black bg-[#161616] shadow-[0_26px_56px_rgba(0,0,0,0.62)]">
      <TitleBar />
      <TopBar />
      <div className="flex h-[984px] shrink-0">
        <FileBrowser />
        <div className="w-1 shrink-0" />
        <Preview />
        <div className="w-[5px] shrink-0" />
        <Properties />
      </div>
      <Sequencer />
      <Timeline />
      <StatusBar />
      <div className="pointer-events-none absolute inset-0 rounded-[14px] border border-white/20" />
    </div>
  </div>
);

export default App;
